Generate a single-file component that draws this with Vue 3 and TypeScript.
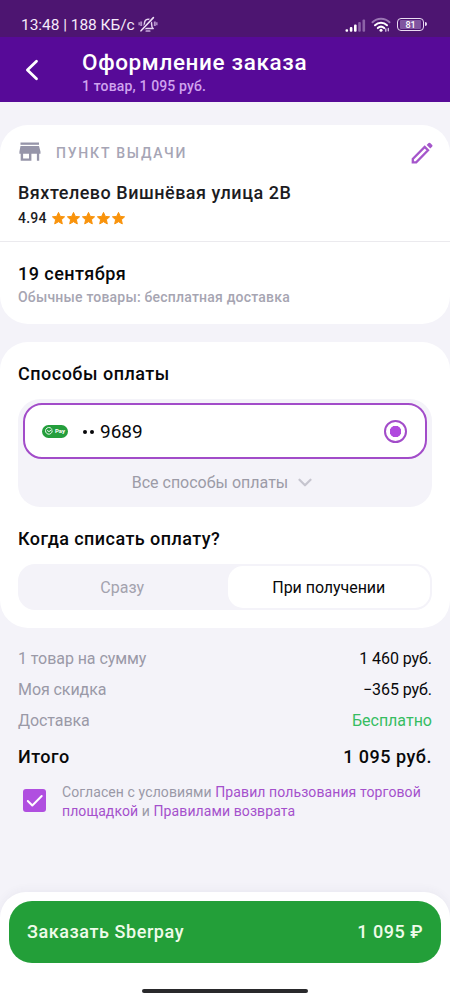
<script setup lang="ts">
interface SummaryRow {
  label: string
  value: string
  kind: 'plain' | 'free'
}

const stars: number[] = [1, 2, 3, 4, 5]

const rows: SummaryRow[] = [
  { label: '1 товар на сумму', value: '1 460 руб.', kind: 'plain' },
  { label: 'Моя скидка', value: '−365 руб.', kind: 'plain' },
  { label: 'Доставка', value: 'Бесплатно', kind: 'free' },
]
</script>

<template>
  <div class="screen">
    <div class="status">
      <span class="clock">13:48 | 188 КБ/с</span>
      <svg class="bell" width="20" height="18" viewBox="0 0 20 18" fill="none">
        <path d="M5 12.5c1.2-1 1.4-2 1.4-4.6C6.400 5 7.700 3.300 10 3.300s3.600 1.700 3.600 4.600c0 2.600.3 3.600 1.600 4.600z" stroke="#e6d5f0" stroke-width="1.500" stroke-linejoin="round" />
        <path d="M8.300 15h3.400" stroke="#c9a9dc" stroke-width="1.700" stroke-linecap="round" />
        <path d="M3.200 5.500v4.600M16.800 5.500v4.600" stroke="#b592cb" stroke-width="1.900" />
        <path d="M1.200 6.200v3M18.800 6.200v3" stroke="#a781bf" stroke-width="1.600" />
        <path d="M15.200 1.600L3 14.800" stroke="#4d1571" stroke-width="3.200" />
        <path d="M15.400 1.600L3 14.800" stroke="#eedff5" stroke-width="1.600" stroke-linecap="round" />
      </svg>
      <svg class="signal" width="21" height="14" viewBox="0 0 21 14">
        <rect x="0.500" y="10.200" width="2.600" height="2.600" rx="1" fill="#fff" />
        <rect x="4.800" y="8" width="2.600" height="4.800" rx="1" fill="#fff" />
        <rect x="9" y="5.500" width="2.600" height="7.300" rx="1" fill="#fff" />
        <rect x="13.200" y="3" width="2.600" height="9.800" rx="1" fill="#8c63a8" />
        <rect x="17.500" y="0.500" width="2.600" height="12.300" rx="1" fill="#8c63a8" />
      </svg>
      <svg class="wifi" width="20" height="16" viewBox="0 0 20 16" fill="none" stroke-linecap="round">
        <path d="M1.500 5.200C6.300.5 13.700.5 18.500 5.200" stroke="#9a76b3" stroke-width="2" />
        <path d="M4 8.200c3.400-3.300 8.600-3.300 12 0" stroke="#fff" stroke-width="2" />
        <path d="M6.800 11.100c1.900-1.800 4.500-1.800 6.400 0" stroke="#fff" stroke-width="2" />
        <circle cx="10" cy="13.200" r="1.500" fill="#fff" />
        <path d="M14.800 11.800v2.400M17.300 11.400v2.400" stroke="#d9c5e6" stroke-width="1.300" />
      </svg>
      <div class="battery"><span class="level">81</span></div>
    </div>

    <header class="header">
      <svg class="back" width="16" height="24" viewBox="0 0 16 24" fill="none" stroke="#fff" stroke-width="2.800" stroke-linecap="round" stroke-linejoin="round">
        <path d="M12.500 3.200L3.400 12l9.100 8.800" />
      </svg>
      <div class="titles">
        <h1>Оформление заказа</h1>
        <p>1 товар, 1 095 руб.</p>
      </div>
    </header>

    <main class="content">
      <section class="card pickup">
        <div class="pickup-head">
          <svg width="22" height="19" viewBox="0 0 22 19" fill="#9695a9">
            <rect x="1.500" y="0.500" width="18.500" height="2.300" />
            <path fill-rule="evenodd" d="M1.500 4h18.500l1.500 5.800v2h-1.300v7h-2.300v-7h-5.500v7H1.700v-7H.4v-2zM4.100 11.800v4.700h5.900v-4.700z" />
          </svg>
          <span class="caption">ПУНКТ ВЫДАЧИ</span>
          <svg class="pencil" width="24" height="24" viewBox="0 0 24 24" fill="none">
            <path d="M2.800 21.300v-3.400L14.700 6l3.300 3.300L6.200 21.300z" stroke="#a556cb" stroke-width="2.300" />
            <path d="M16.700 3.900l1.900-1.900q.8-.7 1.600 0l2 2q.7.8 0 1.600L20.300 7.500z" fill="#a556cb" />
          </svg>
        </div>
        <div class="address">Вяхтелево Вишнёвая улица 2В</div>
        <div class="rating">
          <span>4.94</span>
          <svg v-for="star in stars" :key="star" width="15" height="15" viewBox="0 0 15 15">
            <path d="M7.500 1.400l1.800 4 4.300.4-3.200 2.900.9 4.200-3.800-2.200-3.800 2.200.9-4.200-3.200-2.900 4.300-.4z" fill="#f9930b" stroke="#f9930b" stroke-width="1" stroke-linejoin="round" />
          </svg>
        </div>
        <div class="delivery">
          <div class="date">19 сентября</div>
          <div class="note">Обычные товары: бесплатная доставка</div>
        </div>
      </section>

      <section class="card payment">
        <h2 class="h-methods">Способы оплаты</h2>
        <div class="methods">
          <div class="method">
            <div class="sber">
              <svg width="8" height="8" viewBox="0 0 8 8" fill="none" stroke="#fff" stroke-width="0.900" stroke-linecap="round">
                <path d="M6.200 1.300A3.400 3.400 0 1 0 7.300 4M2.400 3.600L4 4.600l3-2" />
              </svg>
              <span>Pay</span>
            </div>
            <span class="dots"><i></i><i></i></span>
            <span class="number">9689</span>
            <span class="radio"></span>
          </div>
          <div class="all-methods">
            <span>Все способы оплаты</span>
            <svg width="14" height="10" viewBox="0 0 14 10" fill="none" stroke="#c6c5cf" stroke-width="2.200" stroke-linecap="round" stroke-linejoin="round">
              <path d="M1.500 1.700L7 7.300l5.500-5.600" />
            </svg>
          </div>
        </div>
        <h2 class="h-when">Когда списать оплату?</h2>
        <div class="segments">
          <div class="segment">Сразу</div>
          <div class="segment active">При получении</div>
        </div>
      </section>

      <section class="summary">
        <div v-for="row in rows" :key="row.label" class="row">
          <span>{{ row.label }}</span>
          <span class="value" :class="row.kind">{{ row.value }}</span>
        </div>
        <div class="row total">
          <span>Итого</span>
          <span>1 095 руб.</span>
        </div>
      </section>

      <div class="agreement">
        <span class="checkbox">
          <svg width="23" height="23" viewBox="0 0 23 23" fill="none" stroke="#fff" stroke-width="2" stroke-linecap="round" stroke-linejoin="round">
            <path d="M4.800 12l4.500 4.500L18.700 7" />
          </svg>
        </span>
        <p>
          <span class="line">Согласен с условиями <a>Правил пользования торговой</a></span>
          <span class="line"><a>площадкой</a> и <a>Правилами возврата</a></span>
        </p>
      </div>
    </main>

    <footer class="footer">
      <div class="order">
        <span class="order-label">Заказать Sberpay</span>
        <span class="order-sum">1 095 ₽</span>
      </div>
      <div class="home"></div>
    </footer>
  </div>
</template>

<style>
body {
  margin: 0;
}
</style>

<style scoped>
.screen {
  width: 450px;
  height: 1000px;
  display: flex;
  flex-direction: column;
  overflow: hidden;
  background: #f4f3f9;
  font-family: Roboto, "Noto Sans", sans-serif;
  color: #08080a;
  white-space: nowrap;
}

h1, h2, p {
  margin: 0;
  font-weight: 500;
}

svg {
  display: block;
  flex: none;
}

.status {
  height: 37px;
  flex: none;
  box-sizing: border-box;
  padding: 15px 24px 0 21px;
  display: flex;
  align-items: flex-start;
  background: #4d1571;
}

.clock {
  width: 117px;
  font-size: 15.500px;
  line-height: 20px;
  letter-spacing: -0.040px;
  color: #f5eafa;
}

.bell {
  margin-top: 1px;
}

.signal {
  margin: 4px 0 0 auto;
}

.wifi {
  margin: 2px 0 0 5px;
}

.battery {
  position: relative;
  box-sizing: border-box;
  width: 27px;
  height: 13px;
  margin: 3px 2px 0 6px;
  padding: 1px 2px;
  border: 1.500px solid #eadcf2;
  border-radius: 4px;
  display: flex;
}

.battery::after {
  content: "";
  position: absolute;
  right: -4px;
  top: 3px;
  width: 2px;
  height: 4px;
  border-radius: 0 2px 2px 0;
  background: #eadcf2;
}

.level {
  flex: 1;
  border-radius: 1px;
  background: #8055a0;
  font-size: 9px;
  font-weight: 500;
  line-height: 10px;
  text-align: center;
  color: #fff;
}

.header {
  height: 65px;
  flex: none;
  display: flex;
  align-items: flex-start;
  background: #570a98;
}

.back {
  margin: 21px 0 0 24px;
}

.titles {
  margin-left: 42px;
}

.titles h1 {
  margin-top: 11px;
  font-size: 22.500px;
  line-height: 28px;
  letter-spacing: 0.640px;
  color: #fff;
}

.titles p {
  font-size: 14px;
  line-height: 20px;
  font-weight: 500;
  letter-spacing: 0.150px;
  color: #cfa3ee;
}

.content {
  flex: 1;
  display: flex;
  flex-direction: column;
}

.card {
  box-sizing: border-box;
  background: #fff;
  border-radius: 28px;
}

.pickup {
  margin-top: 23px;
  height: 199px;
}

.pickup-head {
  height: 38px;
  padding: 17px 16px 0 19px;
  box-sizing: border-box;
  display: flex;
  align-items: flex-start;
}

.caption {
  margin: -1px 0 0 15px;
  font-size: 14px;
  font-weight: 500;
  line-height: 24px;
  letter-spacing: 1.800px;
  color: #a6a5b5;
}

.pencil {
  margin: -1px 0 0 auto;
}

.address {
  margin: 18px 0 0 18px;
  font-size: 18px;
  line-height: 24px;
  font-weight: 500;
  letter-spacing: 0.510px;
  color: #1c1c1f;
}

.rating {
  height: 24px;
  margin-left: 18px;
  padding-top: 3px;
  display: flex;
  align-items: center;
  box-sizing: border-box;
}

.rating span {
  width: 33px;
  font-size: 14px;
  font-weight: 500;
  line-height: 20px;
  letter-spacing: 0.200px;
  margin-top: -1px;
  color: #1c1c1f;
}

.delivery {
  margin-top: 12px;
  padding: 20px 18px 0;
  border-top: 1px solid #ebeaee;
}

.date {
  font-size: 18px;
  line-height: 24px;
  font-weight: 500;
  letter-spacing: 0.450px;
}

.note {
  font-size: 14px;
  font-weight: 500;
  line-height: 23px;
  letter-spacing: 0.210px;
  color: #a6a5b2;
}

.payment {
  margin-top: 18px;
  height: 286px;
  padding: 20px 18px 0;
}

.payment h2 {
  font-size: 18px;
  line-height: 24px;
}

.h-methods {
  letter-spacing: 0.500px;
}

.h-when {
  letter-spacing: 0.440px;
}

.methods {
  box-sizing: border-box;
  height: 108px;
  margin: 13px 0 20px;
  padding: 4px 5px 0;
  border-radius: 22px;
  background: #f4f3f9;
}

.method {
  box-sizing: border-box;
  height: 56px;
  padding: 0 18px 0 17px;
  border: 2px solid #a24cc9;
  border-radius: 19px;
  background: #fff;
  display: flex;
  align-items: center;
}

.sber {
  width: 26px;
  height: 13px;
  border-radius: 7px;
  background: #249e3c;
  display: flex;
  align-items: center;
  justify-content: center;
  gap: 2px;
}

.sber span {
  font-size: 6px;
  line-height: 8px;
  font-weight: 700;
  color: #fff;
}

.dots {
  width: 17px;
  margin-left: 15px;
  padding-top: 1px;
  display: flex;
  gap: 3px;
}

.dots i {
  width: 4px;
  height: 4px;
  border-radius: 50%;
  background: #08080a;
}

.number {
  font-size: 19px;
  line-height: 24px;
  margin-top: 2px;
}

.radio {
  box-sizing: border-box;
  width: 23px;
  height: 23px;
  margin-left: auto;
  border: 2px solid #a24cc9;
  border-radius: 50%;
  background: radial-gradient(circle, #b04ade 0 5.500px, #fff 6px);
}

.all-methods {
  height: 47px;
  padding-right: 6px;
  display: flex;
  align-items: center;
  justify-content: center;
  gap: 10px;
  font-size: 16px;
  color: #9c9ba7;
}

.segments {
  box-sizing: border-box;
  height: 46px;
  margin-top: 13px;
  padding: 2px;
  border-radius: 17px;
  background: #f4f3f9;
  display: flex;
}

.segment {
  flex: 207px 1 1;
  box-sizing: border-box;
  padding-right: 3px;
  font-size: 16px;
  line-height: 44px;
  text-align: center;
  color: #a3a2ae;
}

.segment.active {
  flex-basis: 202px;
  padding-right: 0;
  border-radius: 15px;
  background: #fff;
  letter-spacing: -0.050px;
  color: #08080a;
}

.summary {
  padding: 15px 18px 0;
}

.row {
  height: 31px;
  display: flex;
  justify-content: space-between;
  font-size: 16px;
  line-height: 31px;
  letter-spacing: -0.070px;
  color: #9a99a7;
}

.value.plain {
  color: #08080a;
}

.value.free {
  letter-spacing: 0;
  color: #36bd62;
}

.row.total {
  height: 42px;
  font-size: 18px;
  line-height: 42px;
  font-weight: 500;
  letter-spacing: 0.500px;
  color: #08080a;
}

.agreement {
  display: flex;
  margin: 5px 0 0 23px;
}

.checkbox {
  width: 23px;
  height: 23px;
  margin-top: 6px;
  border-radius: 3px;
  background: #b04fe0;
}

.agreement p {
  margin-left: 16px;
  font-size: 14px;
  font-weight: 400;
  letter-spacing: 0.100px;
  color: #9a99a7;
}

.line {
  display: block;
  line-height: 19px;
}

.agreement a {
  color: #a450cc;
}

.footer {
  box-sizing: border-box;
  height: 108px;
  flex: none;
  padding: 9px 9px 0;
  border-radius: 26px 26px 0 0;
  background: #fff;
  box-shadow: 0 -2px 10px rgba(60, 50, 90, 0.050);
  display: flex;
  flex-direction: column;
  align-items: center;
}

.order {
  box-sizing: border-box;
  width: 432px;
  height: 62px;
  padding: 0 18px 1px;
  border-radius: 23px;
  background: #239f39;
  display: flex;
  align-items: center;
  justify-content: space-between;
  font-size: 18px;
  font-weight: 500;
  color: #effbe9;
}

.order-label {
  letter-spacing: 0.570px;
}

.order-sum {
  letter-spacing: 0.500px;
}

.home {
  width: 166px;
  height: 4px;
  margin-top: 26px;
  border-radius: 2px;
  background: #29292b;
}
</style>
